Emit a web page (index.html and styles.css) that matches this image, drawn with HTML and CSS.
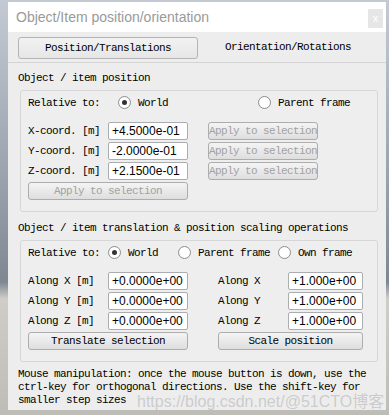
FILE: index.html
```html
<!DOCTYPE html>
<html lang="en">
<head>
    <meta charset="UTF-8">
    <title>Object/Item position/orientation</title>
    <link rel="stylesheet" href="styles.css">
</head>
<body>
    <div class="window">
        <!-- Title bar -->
        <div class="titlebar">
            <span class="title">Object/Item position/orientation</span>
            <span class="close">x</span>
        </div>

        <!-- Tabs -->
        <div class="tabs">
            <div class="tab active">Position/Translations</div>
            <div class="tab">Orientation/Rotations</div>
        </div>

        <div class="content">
            <div class="section-label">Object / item position</div>
            <div class="group">
                <div class="relative-row">
                    <span class="rel-label wide">Relative to:</span>
                    <span class="option opt-world"><span class="radio checked"></span>World</span>
                    <span class="option"><span class="radio"></span>Parent frame</span>
                </div>
                <div class="pos-grid">
                    <span class="row-label">X-coord. [m]</span>
                    <input class="field" type="text" value="+4.5000e-01" readonly>
                    <button class="btn disabled side">Apply to selection</button>

                    <span class="row-label">Y-coord. [m]</span>
                    <input class="field" type="text" value="-2.0000e-01" readonly>
                    <button class="btn disabled side">Apply to selection</button>

                    <span class="row-label">Z-coord. [m]</span>
                    <input class="field" type="text" value="+2.1500e-01" readonly>
                    <button class="btn disabled side">Apply to selection</button>

                    <button class="btn disabled span-left">Apply to selection</button>
                </div>
            </div>

            <div class="section-label">Object / item translation &amp; position scaling operations</div>
            <div class="group">
                <div class="relative-row">
                    <span class="rel-label">Relative to:</span>
                    <span class="option opt-short"><span class="radio checked"></span>World</span>
                    <span class="option opt-mid"><span class="radio"></span>Parent frame</span>
                    <span class="option"><span class="radio"></span>Own frame</span>
                </div>
                <div class="ops-grid">
                    <span class="row-label">Along X [m]</span>
                    <input class="field" type="text" value="+0.0000e+00" readonly>
                    <span class="row-label right">Along X</span>
                    <input class="field" type="text" value="+1.000e+00" readonly>

                    <span class="row-label">Along Y [m]</span>
                    <input class="field" type="text" value="+0.0000e+00" readonly>
                    <span class="row-label right">Along Y</span>
                    <input class="field" type="text" value="+1.000e+00" readonly>

                    <span class="row-label">Along Z [m]</span>
                    <input class="field" type="text" value="+0.0000e+00" readonly>
                    <span class="row-label right">Along Z</span>
                    <input class="field" type="text" value="+1.000e+00" readonly>

                    <button class="btn span-left">Translate selection</button>
                    <button class="btn span-right">Scale position</button>
                </div>
            </div>

            <p class="hint">Mouse manipulation: once the mouse button is down, use the ctrl-key for orthogonal directions. Use the shift-key for smaller step sizes</p>
        </div>
    </div>

    <div class="watermark">https://blog.csdn.net/@51CTO博客</div>
</body>
</html>
```

FILE: styles.css
```css
/* General reset */
* {
    margin: 0;
    padding: 0;
    box-sizing: border-box;
}

body {
    width: 389px;
    height: 415px;
    overflow: hidden;
    position: relative;
    font-family: 'Liberation Mono', monospace;
    font-size: 11px;
    letter-spacing: -0.6px;
    color: #000;
    background: linear-gradient(to bottom, #c3cad4 0%, #97a0ab 45%, #7f8792 68%, #cfcdc7 72%, #bebcb6 100%);
    padding: 2px 3px 0 8px;
}

/* Dialog window */
.window {
    width: 378px;
    height: 408px;
    background-color: #ededed;
}

.titlebar {
    height: 30px;
    background-color: #fff;
    display: flex;
    justify-content: space-between;
    align-items: flex-start;
    padding-left: 8px;
}

.title {
    font-family: 'Liberation Sans', sans-serif;
    font-size: 14px;
    letter-spacing: 0;
    color: #9a9a9a;
    line-height: 30px;
}

.close {
    width: 15px;
    height: 19px;
    margin: 7px 3px 0 0;
    background-color: #e6e6e6;
    color: #fff;
    font-family: 'Liberation Sans', sans-serif;
    font-size: 11px;
    letter-spacing: 0;
    text-align: center;
    line-height: 18px;
}

/* Tabs */
.tabs {
    display: flex;
    align-items: center;
    height: 31px;
    padding: 5px 8px 3px 10px;
    border-bottom: 1px solid #d4d4d4;
}

.tab {
    flex: 1;
    height: 22px;
    line-height: 21px;
    text-align: center;
}

.tab.active {
    flex: 0 0 180px;
    border: 1px solid #b4b4b4;
    border-radius: 3px;
    background: linear-gradient(to bottom, #f2f2f2, #e6e6e6);
}

/* Content */
.content {
    padding: 9px 8px 0 10px;
}

.section-label {
    height: 13px;
    line-height: 13px;
    margin-bottom: 5px;
}

.group {
    margin: 0 0 10px 2px;
    border: 1px solid #d6d6d6;
    border-radius: 3px;
    background-color: #eeeeee;
    padding: 5px 7px 11px 7px;
}

.relative-row {
    display: flex;
    align-items: center;
    height: 13px;
    margin-bottom: 13px;
}

.rel-label {
    width: 80px;
}

.rel-label.wide {
    width: 90px;
}

.option {
    display: flex;
    align-items: center;
    gap: 7px;
}

.opt-world {
    width: 140px;
}

.opt-short {
    width: 70px;
}

.opt-mid {
    width: 100px;
}

.radio {
    width: 13px;
    height: 13px;
    border-radius: 50%;
    border: 1px solid #8e8f8f;
    background: radial-gradient(circle, #fff 60%, #eaeaea);
    display: flex;
    justify-content: center;
    align-items: center;
}

.radio.checked::after {
    content: "";
    width: 5px;
    height: 5px;
    border-radius: 50%;
    background-color: #333;
}

/* Grids */
.pos-grid {
    display: grid;
    grid-template-columns: 80px 80px 130px;
    grid-auto-rows: 18px;
    row-gap: 2px;
}

.pos-grid .side {
    margin-left: 20px;
}

.ops-grid {
    display: grid;
    grid-template-columns: 80px 80px 100px 75px;
    grid-auto-rows: 18px;
    row-gap: 2px;
}

.row-label.right {
    padding-left: 30px;
}

.span-left {
    grid-column: 1 / 3;
}

.span-right {
    grid-column: 3 / 5;
    margin-left: 30px;
}

.row-label {
    line-height: 18px;
    white-space: pre;
}

.field {
    height: 18px;
    width: 100%;
    border: 1px solid #acadb0;
    border-radius: 2px;
    background-color: #fff;
    font-family: 'Liberation Sans', sans-serif;
    font-size: 12px;
    letter-spacing: 0;
    padding: 0 3px;
    color: #000;
    outline: none;
}

.btn {
    height: 18px;
    padding: 0;
    white-space: nowrap;
    border: 1px solid #adadad;
    border-radius: 3px;
    background: linear-gradient(to bottom, #f4f4f4, #dedede);
    font-family: 'Liberation Mono', monospace;
    font-size: 11px;
    letter-spacing: -0.6px;
    color: #000;
    line-height: 16px;
}

.btn.disabled {
    color: #a2a2a2;
}

/* Help text */
.hint {
    line-height: 13px;
    margin-top: -4px;
    width: 360px;
}

/* Blog watermark over the screenshot */
.watermark {
    position: absolute;
    left: 137px;
    top: 388px;
    font-family: 'Liberation Sans', 'Noto Sans CJK SC', sans-serif;
    font-size: 16px;
    letter-spacing: 0;
    color: rgba(150, 150, 150, 0.4);
}
```
